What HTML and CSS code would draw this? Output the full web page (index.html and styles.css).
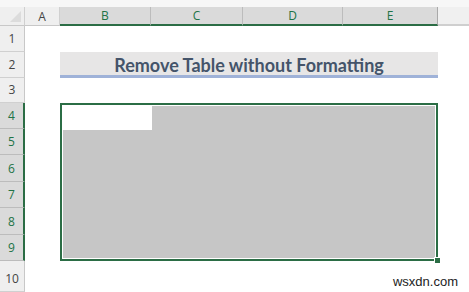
FILE: index.html
```html
<!DOCTYPE html>
<html lang="en">
<head>
  <meta charset="UTF-8" />
  <meta name="viewport" content="width=device-width, initial-scale=1.0" />
  <title>Remove Table without Formatting</title>
  <link rel="stylesheet" href="styles.css">
</head>
<body>
  <div class="topstrip"></div>

  <div class="sheet">
    <!-- header row -->
    <div class="corner"><span class="corner-tri"></span></div>
    <div class="col-head">A</div>
    <div class="col-head active">B</div>
    <div class="col-head active">C</div>
    <div class="col-head active">D</div>
    <div class="col-head active last">E</div>
    <div class="col-head rest"></div>

    <!-- row headers -->
    <div class="row-head r1">1</div>
    <div class="row-head r2">2</div>
    <div class="row-head r3">3</div>
    <div class="row-head r4 active">4</div>
    <div class="row-head r5 active">5</div>
    <div class="row-head r6 active">6</div>
    <div class="row-head r7 active">7</div>
    <div class="row-head r8 active">8</div>
    <div class="row-head r9 active">9</div>
    <div class="row-head r10">10</div>

    <!-- B2:E2 title -->
    <div class="title-cell">Remove Table without Formatting</div>

    <!-- B4:E9 selection -->
    <div class="selection">
      <div class="sel-fill">
        <div class="active-cell"></div>
      </div>
      <span class="fill-handle"></span>
    </div>
  </div>

  <div class="watermark">wsxdn.com</div>
</body>
</html>
```

FILE: styles.css
```css
:root {
  --green: #217346;
  --green-dark: #2b6d45;
  --head-bg: #efefef;
  --head-active: #dadada;
  --head-line: #d0d0d0;
  --title-bg: #e7e6e6;
  --title-text: #44546a;
  --title-line: #9fb2d8;
  --fill: #c6c6c6;
}

body {
  margin: 0;
  padding: 0;
  width: 469px;
  height: 292px;
  overflow: hidden;
  background: #fff;
  font-family: 'Open Sans', 'Liberation Sans', sans-serif;
  position: relative;
}

.topstrip {
  height: 7px;
  background: #f7f7f7;
}

.sheet {
  display: grid;
  grid-template-columns: 25px 35px 91px 92px 100px 95px 1fr;
  grid-template-rows: 19px 26px 26px 25px 26px 26px 27px 26px 27px 26px 31px;
}

/* column headers */
.corner {
  grid-column: 1;
  grid-row: 1;
  background: var(--head-bg);
  border-right: 1px solid var(--head-line);
  border-bottom: 1px solid #c8c8c8;
  position: relative;
}

.corner-tri {
  position: absolute;
  right: 3px;
  bottom: 3px;
  width: 0;
  height: 0;
  border-left: 11px solid transparent;
  border-bottom: 11px solid #dcdcdc;
}

.col-head {
  grid-row: 1;
  display: flex;
  align-items: center;
  justify-content: center;
  font-size: 12px;
  color: #444;
  background: var(--head-bg);
  border-right: 1px solid var(--head-line);
  border-bottom: 1px solid #c8c8c8;
}

.col-head.active {
  background: var(--head-active);
  color: var(--green);
  border-right-color: #bcbcbc;
  border-bottom: 2px solid var(--green-dark);
}

.col-head.last {
  border-right-color: #a9a9a9;
}

.col-head.rest {
  background: #f0f0f0;
  border-right: none;
  border-bottom: 2px solid #cfcfcf;
}

/* row headers */
.row-head {
  grid-column: 1;
  display: flex;
  align-items: flex-end;
  justify-content: center;
  padding-bottom: 4px;
  box-sizing: border-box;
  font-size: 12px;
  color: #444;
  background: var(--head-bg);
  border-right: 1px solid #c8c8c8;
  border-bottom: 1px solid var(--head-line);
}

.row-head.active {
  background: var(--head-active);
  color: var(--green);
  border-right: 2px solid var(--green-dark);
  border-bottom-color: #bcbcbc;
}

.r1 { grid-row: 2; }
.r2 { grid-row: 3; }
.r3 { grid-row: 4; }
.r4 { grid-row: 5; }
.r5 { grid-row: 6; }
.r6 { grid-row: 7; }
.r7 { grid-row: 8; }
.r8 { grid-row: 9; }
.r9 { grid-row: 10; }
.r10 { grid-row: 11; }

/* title B2:E2 */
.title-cell {
  grid-column: 3 / 7;
  grid-row: 3;
  background: var(--title-bg);
  border-bottom: 3px solid var(--title-line);
  display: flex;
  align-items: center;
  justify-content: center;
  padding-top: 2px;
  box-sizing: border-box;
  font-family: Lato, 'Liberation Sans', sans-serif;
  font-weight: 700;
  font-size: 18px;
  color: var(--title-text);
}

/* selection B4:E9 */
.selection {
  grid-column: 3 / 7;
  grid-row: 5 / 11;
  border: 2px solid var(--green-dark);
  padding: 1px;
  box-sizing: border-box;
  position: relative;
  display: flex;
}

.sel-fill {
  flex: 1;
  background: var(--fill);
}

.active-cell {
  width: 89px;
  height: 24px;
  background: #fff;
}

.fill-handle {
  position: absolute;
  right: -5px;
  bottom: -5px;
  width: 5px;
  height: 5px;
  background: var(--green-dark);
  border: 1px solid #fff;
}

.watermark {
  position: absolute;
  right: 11px;
  bottom: 3px;
  font-family: 'Liberation Sans', Arial, sans-serif;
  font-size: 13px;
  color: #222;
}
```
